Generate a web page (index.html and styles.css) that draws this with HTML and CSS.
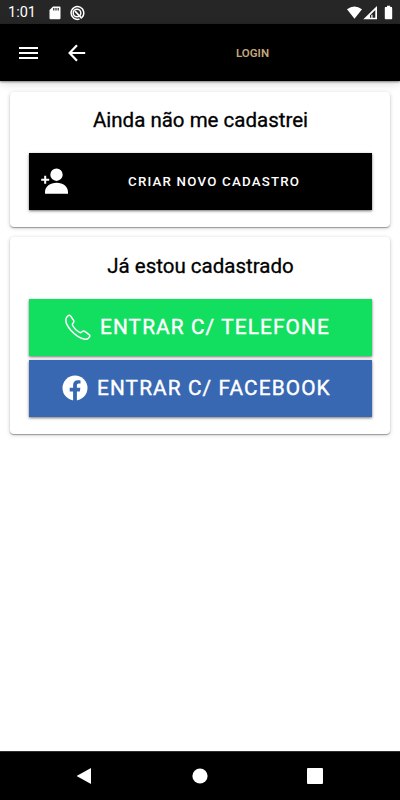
FILE: index.html
```html
<!DOCTYPE html>
<html lang="pt-BR">
<head>
<meta charset="utf-8">
<title>Login</title>
<link rel="stylesheet" href="styles.css">
</head>
<body>
<header class="status">
  <span class="clock">1:01</span>
  <svg class="sd" width="12" height="14" viewBox="0 0 12 14"><path fill="#fff" fill-rule="evenodd" d="M4 .5h6.500q1 0 1 1v10.800q0 1-1 1h-9q-1 0-1-1V4zM4.200 2v2.500h1.200V2zm2.200 0v2.500h1.200V2zm2.200 0v2.500h1.200V2z"/></svg>
  <svg class="sync" width="16" height="16" viewBox="0 0 16 16" fill="none" stroke="#fff"><path stroke-width="1.500" d="M12.900 12.500A6.350 6.350 0 1 0 10.500 14"/><circle cx="8" cy="8" r="3.800" stroke-width="1.500"/><path stroke-width="1.700" d="M6 6.200l6.800 7.200"/></svg>
  <svg class="signals" width="48" height="16" viewBox="0 0 48 16"><path fill="#fff" d="M1 4.300Q8.400-1.500 16 4.300L8.500 13.700z"/><path fill="#fff" fill-rule="evenodd" d="M31 1v13.300H17.300zM29.300 5L24 10.300v2.500h5.300z"/><path fill="#fff" d="M25.300 9.700h1.200v3.500h-1.200z"/><path fill="#fff" d="M39.200 2H41V.8h3.200V2H46v1l.2.500v10q0 .8-.8.800h-5.800q-.8 0-.8-.8V2.800z"/></svg>
</header>
<nav class="toolbar">
  <svg class="menu" width="20" height="14" viewBox="0 0 20 14"><path stroke="#fff" stroke-width="2" d="M0 2h19M0 7h19M0 12h19"/></svg>
  <svg class="back" width="18" height="18" viewBox="0 0 18 18"><path fill="none" stroke="#fff" stroke-width="2.200" d="M17.200 9H2M9 1.200L1.600 9 9 16.800"/></svg>
  <h1 class="title">LOGIN</h1>
</nav>
<main class="content">
  <section class="card">
    <h2 class="heading">Ainda não me cadastrei</h2>
    <button class="button signup">
      <svg width="28" height="27" viewBox="0 0 28 27"><path fill="#fff" d="M15.500.5a6.200 6.200 0 0 1 0 12.400 6.200 6.200 0 0 1 0-12.400zM4 25.700v-1.800c0-5.300 5.200-9.200 11.700-9.200S27 18.600 27 23.900v1.800z"/><path stroke="#fff" stroke-width="2" d="M.2 11.800h8M4.200 7.800v8"/></svg>
      <span>CRIAR NOVO CADASTRO</span>
    </button>
  </section>
  <section class="card">
    <h2 class="heading">Já estou cadastrado</h2>
    <button class="button large phone">
      <svg width="26" height="26" viewBox="0 0 26 26"><path fill="none" stroke="#fff" stroke-width="1.500" stroke-linejoin="round" d="M3.200 1.600Q4.600.5 5.800 2.200L8.600 6.300Q9.300 7.500 8.300 8.800 7 10 7.600 11.500c1.400 2.600 4 5.300 6.900 6.900q1.500.7 2.700-.8 1.200-1 2.600-.2l4 2.900q1.700 1.200.6 2.700l-1.500 1.700q-1 .8-3 .5C15.300 24.500 10 20.800 5.600 15.900 2.700 12.500.5 8 .9 5.300 1 3.700 1.700 2.600 3.200 1.600z"/></svg>
      <span>ENTRAR C/ TELEFONE</span>
    </button>
    <button class="button large facebook">
      <svg width="26" height="26" viewBox="0 0 26 26"><circle cx="13" cy="13" r="12.500" fill="#fff"/><path fill="#3868b2" d="M11.100 26v-9.600H7.700v-3.600h3.400v-2.700c0-3.200 1.900-4.900 4.700-4.900 1.400 0 2.700.2 2.700.2v3.100h-1.600c-1.500 0-2 .9-2 1.900v2.400h3.500l-.6 3.600h-2.900V26z"/></svg>
      <span>ENTRAR C/ FACEBOOK</span>
    </button>
  </section>
</main>
<footer class="navbar">
  <svg width="16" height="18" viewBox="0 0 16 18"><path fill="#fff" d="M15 1v16L.6 9z"/></svg>
  <svg width="16" height="16" viewBox="0 0 16 16"><circle cx="8" cy="8" r="7.600" fill="#fff"/></svg>
  <svg width="16" height="16" viewBox="0 0 16 16"><rect width="16" height="16" rx="1" fill="#fff"/></svg>
</footer>
</body>
</html>
```
FILE: styles.css
```css
* { box-sizing: border-box; }
body {
  margin: 0;
  height: 800px;
  display: flex;
  flex-direction: column;
  overflow: hidden;
  background: #fff;
  font-family: Roboto, sans-serif;
}
svg { display: block; flex: none; }
.status {
  height: 24px;
  flex: none;
  display: flex;
  align-items: center;
  padding: 1px 7px 0 8px;
  background: #262626;
  color: #fff;
}
.clock { width: 41px; font-size: 14.500px; }
.sync { margin-left: 8px; }
.signals { margin-left: auto; margin-right: -1px; }
.toolbar {
  height: 57px;
  flex: none;
  display: flex;
  align-items: center;
  padding-left: 19px;
  background: #000;
  box-shadow: 0 1px 2px rgba(0, 0, 0, .45), 0 2px 9px rgba(0, 0, 0, .16);
}
.back { margin-left: 29px; }
.title {
  margin: 1px 0 0 150px;
  font-size: 11.500px;
  line-height: 16px;
  font-weight: 600;
  color: #c5a77a;
}
.content {
  flex: 1;
  padding: 11px 10px;
  display: flex;
  flex-direction: column;
  gap: 10px;
}
.card {
  padding: 12px 18px 17px 19px;
  border-radius: 4px;
  background: #fff;
  box-shadow: 0 1px 1px rgba(0, 0, 0, .32), 0 1px 4px rgba(0, 0, 0, .2);
}
.heading {
  margin: 0 0 17px;
  font-size: 20.500px;
  line-height: 32px;
  font-weight: 400;
  -webkit-text-stroke: .3px;
  text-align: center;
  color: #000;
}
.button {
  width: 100%;
  height: 57px;
  display: flex;
  align-items: center;
  margin: 0;
  padding: 0;
  border: 0;
  border-radius: 0;
  font-family: inherit;
  font-weight: 500;
  color: #fff;
  box-shadow: 0 1px 2px rgba(0, 0, 0, .4), 0 1px 4px rgba(0, 0, 0, .2);
}
.signup { padding-left: 12px; background: #000; font-size: 13.300px; letter-spacing: 1.200px; }
.signup span { margin-left: 59px; }
.card + .card { padding-top: 13px; }
.large {
  font-size: 20.800px;
  font-weight: 400;
  letter-spacing: 1.120px;
  -webkit-text-stroke: .4px;
  padding-bottom: 2px;
}
.phone { padding-left: 36px; background: #12de60; }
.phone span { margin-left: 9px; }
.facebook { margin-top: 4px; padding-left: 33px; background: #3868b2; }
.facebook span { margin-left: 9px; }
.navbar {
  height: 49px;
  flex: none;
  display: flex;
  align-items: center;
  justify-content: space-between;
  padding: 0 77px 0 76px;
  background: #000;
  border-top: 1px solid #303030;
}
```
